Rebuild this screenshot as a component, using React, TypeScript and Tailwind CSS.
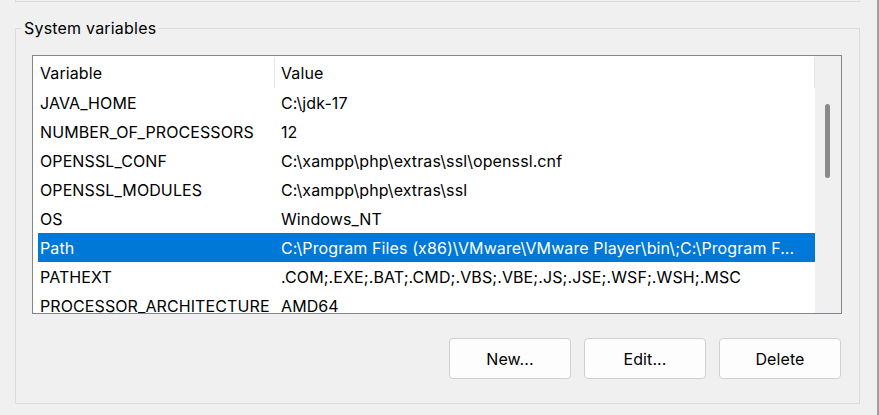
import React from 'react';

type EnvVar = {
  name: string;
  value: string;
};

const systemVars: EnvVar[] = [
  { name: 'JAVA_HOME', value: 'C:\\jdk-17' },
  { name: 'NUMBER_OF_PROCESSORS', value: '12' },
  { name: 'OPENSSL_CONF', value: 'C:\\xampp\\php\\extras\\ssl\\openssl.cnf' },
  { name: 'OPENSSL_MODULES', value: 'C:\\xampp\\php\\extras\\ssl' },
  { name: 'OS', value: 'Windows_NT' },
  { name: 'Path', value: 'C:\\Program Files (x86)\\VMware\\VMware Player\\bin\\;C:\\Program F...' },
  { name: 'PATHEXT', value: '.COM;.EXE;.BAT;.CMD;.VBS;.VBE;.JS;.JSE;.WSF;.WSH;.MSC' },
  { name: 'PROCESSOR_ARCHITECTURE', value: 'AMD64' },
];

const font = { fontFamily: 'Inter, "Noto Sans", sans-serif' };

const DialogButton: React.FC<{ label: string }> = ({ label }) => (
  <button className="w-[122px] h-[41px] rounded-[4px] border border-[#d0d0d0] bg-[#fdfdfd] text-[16px] tracking-[0.1px] text-black">
    {label}
  </button>
);

export default function App() {
  const selected = 'Path';

  return (
    <div className="flex w-[879px] h-[415px] bg-[#f0f0f0] overflow-hidden tracking-[0.1px]" style={font}>
      <div className="flex-1 flex flex-col">
        {/* bottom edge of the user variables group above */}
        <div className="ml-[15px] w-[845px] h-[2px] border-l border-r border-b border-[#dcdcdc]" />

        <div className="relative mt-[26px] ml-[15px] w-[845px] h-[376px] border border-[#dcdcdc] pt-[26px] pl-[16px]">
          <span className="absolute -top-[11px] left-[6px] px-[2px] bg-[#f0f0f0] text-[16px] leading-[20px] tracking-[0.2px] text-black">
            System variables
          </span>

          <div className="flex w-[810px] h-[259px] border border-[#82878f] bg-white overflow-hidden">
            <div className="flex-1 flex flex-col overflow-hidden">
              <div className="flex h-[32px] shrink-0 text-[16px] text-black">
                <div className="w-[241px] pl-[7px] pt-[2px] flex items-center">Variable</div>
                <div className="w-px mt-px bg-[#e5e5e5]" />
                <div className="flex-1 pl-[6px] pt-[2px] flex items-center">Value</div>
                <div className="w-px mt-px bg-[#e5e5e5]" />
              </div>
              {systemVars.map((v) => {
                const isSelected = v.name === selected;
                return (
                  <div
                    key={v.name}
                    className={`flex h-[29px] shrink-0 ml-[5px] pt-[1px] items-center whitespace-nowrap text-[16px] ${
                      isSelected ? 'bg-[#0078d7] text-white' : 'text-black'
                    }`}
                  >
                    <div className="w-[243px] pl-[2px] overflow-hidden">{v.name}</div>
                    <div className="flex-1 overflow-hidden">{v.value}</div>
                  </div>
                );
              })}
            </div>
            <div className="w-[26px] shrink-0 bg-[#f0f0f0] pl-[10px] pt-[48px]">
              <div className="w-[5px] h-[74px] rounded-full bg-[#8a8a8a]" />
            </div>
          </div>

          <div className="flex justify-end gap-[13px] w-[810px] pr-[1px] mt-[24px]">
            <DialogButton label="New..." />
            <DialogButton label="Edit..." />
            <DialogButton label="Delete" />
          </div>
        </div>
      </div>
      <div className="w-[2px] bg-[#a0a0a0]" />
    </div>
  );
}
